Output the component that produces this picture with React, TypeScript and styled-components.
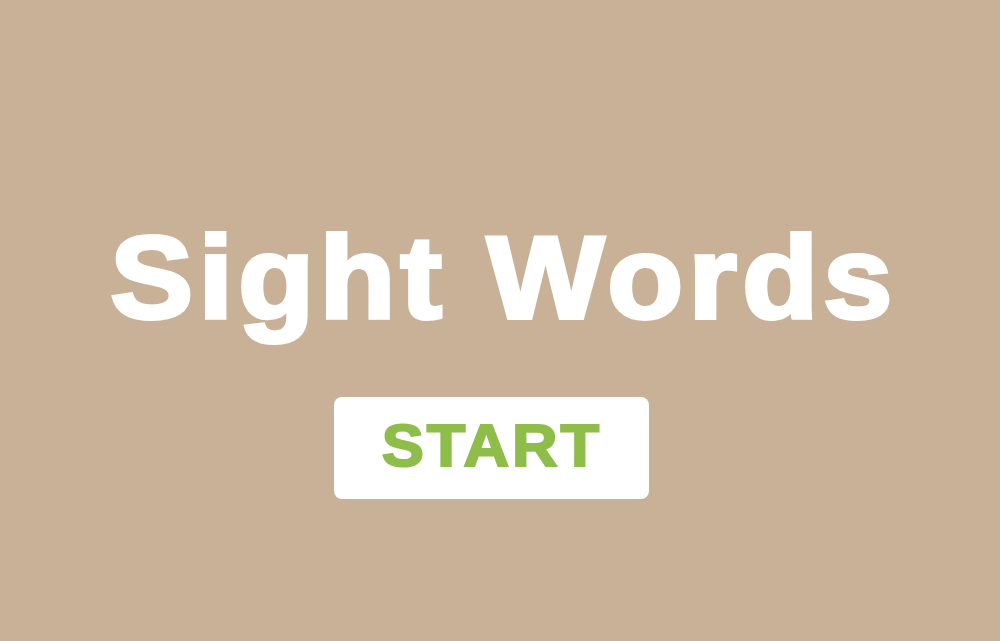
import React from "react";
import styled, { createGlobalStyle } from "styled-components";

const Global = createGlobalStyle`
  html, body { margin: 0; padding: 0; height: 100%; }
  body { background: #c9b198; font-family: "Liberation Sans", Arial, sans-serif; }
  #root { height: 100%; }
`;

const Screen = styled.main`
  height: 641px;
  width: 1000px;
  display: flex;
  flex-direction: column;
  align-items: center;
  padding-top: 218px;
  box-sizing: border-box;
`;

const Title = styled.h1`
  margin: 0 0 0 8px;
  font-family: "Liberation Sans", Arial, sans-serif;
  font-weight: 700;
  font-size: 116px;
  line-height: 120px;
  letter-spacing: 5px;
  color: #ffffff;
  -webkit-text-stroke: 4px #ffffff;
  transform: scaleX(1.07);
  white-space: nowrap;
`;

const StartButton = styled.button`
  margin-top: 59px;
  margin-left: -17px;
  width: 315px;
  height: 102px;
  border: none;
  border-radius: 8px;
  background: #ffffff;
  cursor: pointer;
  padding: 0 0 4px 0;
  display: flex;
  align-items: center;
  justify-content: center;
`;

const ButtonLabel = styled.span`
  display: inline-block;
  color: #8fbd4a;
  font-family: "Liberation Sans", Arial, sans-serif;
  font-weight: 700;
  font-size: 59px;
  line-height: 1;
  letter-spacing: 2.7px;
  -webkit-text-stroke: 2px #8fbd4a;
  transform: scaleX(1.07);
`;

export default function App() {
  return (
    <>
      <Global />
      <Screen>
        <Title>Sight Words</Title>
        <StartButton>
          <ButtonLabel>START</ButtonLabel>
        </StartButton>
      </Screen>
    </>
  );
}
